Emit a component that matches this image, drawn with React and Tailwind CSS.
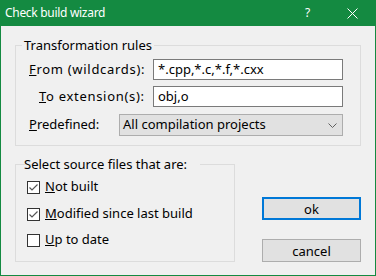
import React from "react";

function Check({ checked }) {
  return (
    <span className="w-[13px] h-[13px] border border-[#333333] bg-white flex items-center justify-center shrink-0">
      {checked && (
        <svg width="11" height="11" viewBox="0 0 11 11">
          <path d="M1.5 5.5 L4 8 L9.5 2.5" fill="none" stroke="#555" strokeWidth="1.2" />
        </svg>
      )}
    </span>
  );
}

export default function App() {
  const font = { fontFamily: '"Noto Sans", "Segoe UI", sans-serif' };
  return (
    <div
      className="w-[376px] h-[276px] bg-[#f0f0f0] border-x border-b border-[#148a41] flex flex-col text-[13px] text-black"
      style={font}
    >
      <div className="h-[26px] -mx-px bg-[#148a41] flex items-center text-white shrink-0">
        <span className="pl-[5px] text-[12px] leading-4 tracking-[-0.3px]">Check build wizard</span>
        <span className="ml-auto w-[6px] text-[12px] leading-4 mr-[36px]">?</span>
        <svg width="11" height="11" viewBox="0 0 11 11" className="mr-[18px]">
          <path d="M0.5 0.5 L10.5 10.5 M10.5 0.5 L0.5 10.5" stroke="white" strokeWidth="1" />
        </svg>
      </div>

      <fieldset className="ml-[14px] mt-[11px] w-[346px] border border-[#dcdcdc] px-0 pt-[6px] pb-[9px]">
        <legend className="ml-[6px] px-[2px] leading-4">Transformation rules</legend>
        <div className="flex items-center h-[21px] pl-[13px]">
          <span className="w-[124px] tracking-[0.7px]"><u>F</u>rom (wildcards):</span>
          <div className="w-[190px] h-[21px] border border-[#7a7a7a] bg-white flex items-center pl-[4px]">*.cpp,*.c,*.f,*.cxx</div>
        </div>
        <div className="flex items-center h-[21px] pl-[23px] mt-[6px]">
          <span className="w-[114px] tracking-[0.7px]"><u>T</u>o extension(s):</span>
          <div className="w-[190px] h-[21px] border border-[#7a7a7a] bg-white flex items-center pl-[4px]">obj,o</div>
        </div>
        <div className="flex items-center h-[22px] pl-[13px] mt-[7px]">
          <span className="w-[90px]"><u>P</u>redefined:</span>
          <div className="w-[224px] h-[22px] border border-[#adadad] bg-[#e1e1e1] flex items-center pl-[3px]">
            <span>All compilation projects</span>
            <svg width="9" height="5" viewBox="0 0 9 5" className="ml-auto mr-[5px]">
              <path d="M0.5 0.5 L4.5 4.5 L8.5 0.5" fill="none" stroke="#606060" strokeWidth="1" />
            </svg>
          </div>
        </div>
      </fieldset>

      <div className="flex ml-[14px] mt-[10px]">
        <fieldset className="w-[220px] border border-[#dcdcdc] pl-[11px] pt-[7px] pb-[13px]">
          <legend className="ml-[6px] px-[2px] leading-4 -translate-x-[11px]">Select source files that are:</legend>
          <div className="flex items-center h-4 gap-[5px]">
            <Check checked />
            <span><u>N</u>ot built</span>
          </div>
          <div className="flex items-center h-4 gap-[5px] mt-[11px]">
            <Check checked />
            <span><u>M</u>odified since last build</span>
          </div>
          <div className="flex items-center h-4 gap-[5px] mt-[10px]">
            <Check />
            <span><u>U</u>p to date</span>
          </div>
        </fieldset>
        <div className="flex flex-col ml-[27px]">
          <button className="mt-[41px] w-[99px] h-[23px] border-2 border-[#0078d7] bg-[#e1e1e1] flex items-center justify-center leading-4">ok</button>
          <button className="mt-[19px] w-[99px] h-[23px] border border-[#adadad] bg-[#e1e1e1] flex items-center justify-center leading-4">cancel</button>
        </div>
      </div>
    </div>
  );
}
